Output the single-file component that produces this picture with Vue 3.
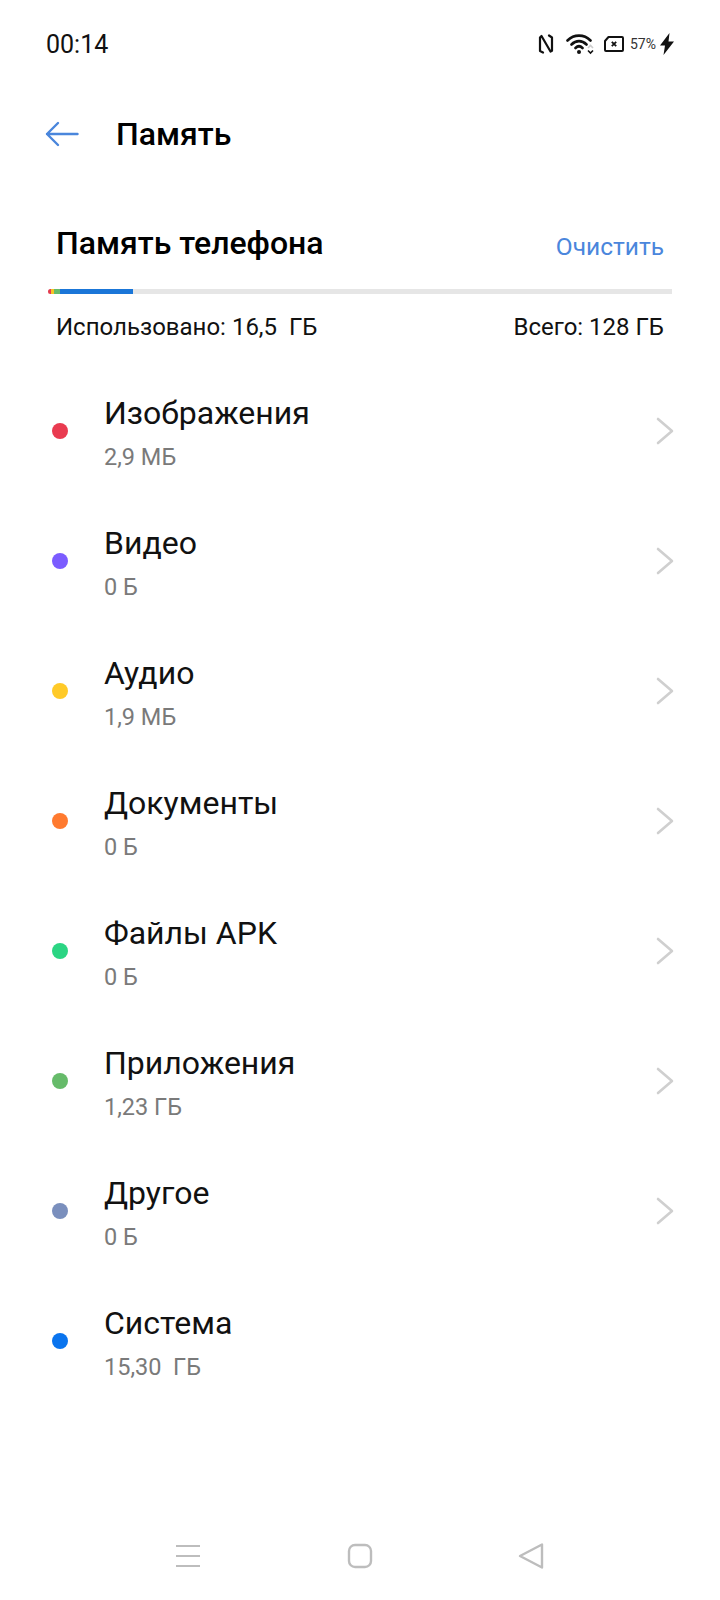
<template>
  <div class="page">
    <header class="status">
      <span class="status__time">00:14</span>
      <div class="status__icons">
        <svg width="16" height="20" viewBox="0 0 16 20" fill="none" stroke="#111" stroke-width="2.200" stroke-linejoin="round" stroke-linecap="round">
          <path d="M5 18.500 2 17V3.500L3.500 2l9 15.500 1.500-.8V3.500L11 1.500" />
        </svg>
        <svg class="status__wifi" width="28" height="22" viewBox="0 0 28 22" fill="none">
          <path d="M1.500 7.500C8 1 18 1 24.500 7.500M5.500 11.500c4.500-4.500 10.500-4.500 15 0M9.500 15c2.200-2.200 4.800-2.200 7 0" stroke="#111" stroke-width="2.600" stroke-linecap="round" />
          <circle cx="13" cy="19" r="2" fill="#111" />
          <path d="M22 17.500l2.500 2.500 2.500-2.500" stroke="#111" stroke-width="1.600" />
          <path d="M22 15l2.500-2.500L27 15" stroke="#ccc" stroke-width="1.600" />
        </svg>
        <svg class="status__sim" width="20" height="16" viewBox="0 0 20 16" fill="none">
          <path d="M4.500 1H18a1 1 0 0 1 1 1v12a1 1 0 0 1-1 1H2a1 1 0 0 1-1-1V5z" stroke="#111" stroke-width="2" stroke-linejoin="round" />
          <path d="M7.800 5.800l4.400 4.400M12.200 5.800l-4.400 4.400" stroke="#111" stroke-width="1.800" />
        </svg>
        <span class="status__pct">57%</span>
        <svg class="status__bolt" width="14" height="22" viewBox="0 0 14 22">
          <path d="M9.500 0 0 12.500h5L3.500 22 14 8.500H8.500z" fill="#111" />
        </svg>
      </div>
    </header>

    <nav class="topbar">
      <svg width="34" height="26" viewBox="0 0 34 26" fill="none" stroke="#4a86dc" stroke-width="2.400" stroke-linecap="round" stroke-linejoin="round">
        <path d="M32.500 13H2M13 2 2 13l11 11" />
      </svg>
      <span class="topbar__title">Память</span>
    </nav>

    <section class="summary">
      <div class="summary__head">
        <h1 class="summary__title">Память телефона</h1>
        <span class="summary__clear">Очистить</span>
      </div>
      <div class="bar">
        <i v-for="seg in segments" :key="seg.color" :style="{ width: seg.width + 'px', background: seg.color }"></i>
      </div>
      <div class="summary__foot">
        <span>Использовано: 16,5&nbsp; ГБ</span>
        <span>Всего: 128 ГБ</span>
      </div>
    </section>

    <ul class="list">
      <li v-for="item in items" :key="item.name" class="row">
        <span class="row__dot" :style="{ background: item.color }"></span>
        <div class="row__text">
          <span class="row__name">{{ item.name }}</span>
          <span class="row__size">{{ item.size }}</span>
        </div>
        <svg v-if="item.more" class="row__chevron" width="20" height="30" viewBox="0 0 20 30" fill="none" stroke="#cfcfcf" stroke-width="2.600" stroke-linecap="round" stroke-linejoin="round">
          <path d="M3 3l14 12L3 27" />
        </svg>
      </li>
    </ul>

    <footer class="navbar">
      <svg width="26" height="24" viewBox="0 0 26 24" fill="none" stroke="#bdbdbd" stroke-width="2">
        <path d="M1 2h24M1 12h24M1 22h24" />
      </svg>
      <svg width="26" height="26" viewBox="0 0 26 26" fill="none" stroke="#bdbdbd" stroke-width="2.400">
        <rect x="2" y="2" width="22" height="22" rx="6" />
      </svg>
      <svg width="26" height="28" viewBox="0 0 26 28" fill="none" stroke="#bdbdbd" stroke-width="2.400" stroke-linejoin="round">
        <path d="M24 2.500v23L2 14z" />
      </svg>
    </footer>
  </div>
</template>

<script setup>
const segments = [
  { color: '#e53b4f', width: 3 },
  { color: '#f5c324', width: 3 },
  { color: '#66bb6a', width: 6 },
  { color: '#1a76d8', width: 73 },
];

const items = [
  { name: 'Изображения', size: '2,9 МБ', color: '#e93b50', more: true },
  { name: 'Видео', size: '0 Б', color: '#7b5cff', more: true },
  { name: 'Аудио', size: '1,9 МБ', color: '#ffca28', more: true },
  { name: 'Документы', size: '0 Б', color: '#ff7a2f', more: true },
  { name: 'Файлы APK', size: '0 Б', color: '#2bd583', more: true },
  { name: 'Приложения', size: '1,23 ГБ', color: '#66bb6a', more: true },
  { name: 'Другое', size: '0 Б', color: '#7a8fbd', more: true },
  { name: 'Система', size: '15,30  ГБ', color: '#0a74ee', more: false },
];
</script>

<style>
body {
  background: #fff;
}
</style>

<style scoped>
.page {
  box-sizing: border-box;
  display: flex;
  flex-direction: column;
  width: 720px;
  height: 1600px;
  background: #fff;
  color: #000;
  font-family: Roboto, "Noto Sans", sans-serif;
}
.status {
  display: flex;
  align-items: center;
  justify-content: space-between;
  height: 28px;
  margin-top: 30px;
  padding: 0 46px;
}
.status__time {
  font-size: 25px;
  color: #111;
}
.status__icons {
  display: flex;
  align-items: center;
}
.status__wifi {
  margin-left: 12px;
}
.status__sim {
  margin-left: 10px;
}
.status__pct {
  margin-left: 6px;
  font-size: 14px;
  color: #333;
}
.status__bolt {
  margin-left: 4px;
}
.topbar {
  display: flex;
  align-items: center;
  gap: 37px;
  height: 60px;
  margin-top: 46px;
  padding-left: 45px;
}
.topbar__title {
  font-size: 32px;
  font-weight: 500;
}
.summary {
  margin-top: 59px;
  padding: 0 48px;
}
.summary__head {
  display: flex;
  align-items: center;
  justify-content: space-between;
  height: 40px;
  padding: 0 8px;
}
.summary__title {
  margin: 0;
  font-size: 32px;
  font-weight: 500;
}
.summary__clear {
  margin-top: 6px;
  font-size: 24.500px;
  color: #4a86dc;
}
.bar {
  display: flex;
  overflow: hidden;
  height: 5px;
  margin-top: 26px;
  border-radius: 3px 0 0 3px;
  background: #e6e6e6;
}
.bar i {
  display: block;
}
.summary__foot {
  display: flex;
  justify-content: space-between;
  margin-top: 18px;
  padding: 0 8px;
  font-size: 24px;
  line-height: 30px;
  color: #111;
}
.list {
  margin: 0;
  margin-top: 24px;
  padding: 0;
  list-style: none;
}
.row {
  display: flex;
  align-items: center;
  height: 130px;
  padding: 0 45px 0 52px;
}
.row__dot {
  flex: 0 0 auto;
  width: 16px;
  height: 16px;
  border-radius: 50%;
}
.row__text {
  display: flex;
  flex: 1;
  flex-direction: column;
  gap: 9px;
  margin-left: 36px;
  padding-top: 3px;
}
.row__name {
  font-size: 32px;
  line-height: 40px;
  color: #111;
}
.row__size {
  font-size: 23.500px;
  line-height: 30px;
  color: #7a7a7a;
  white-space: pre;
}
.navbar {
  display: flex;
  align-items: center;
  justify-content: space-between;
  margin-top: auto;
  margin-bottom: 30px;
  padding: 0 176px 0 175px;
}
</style>
